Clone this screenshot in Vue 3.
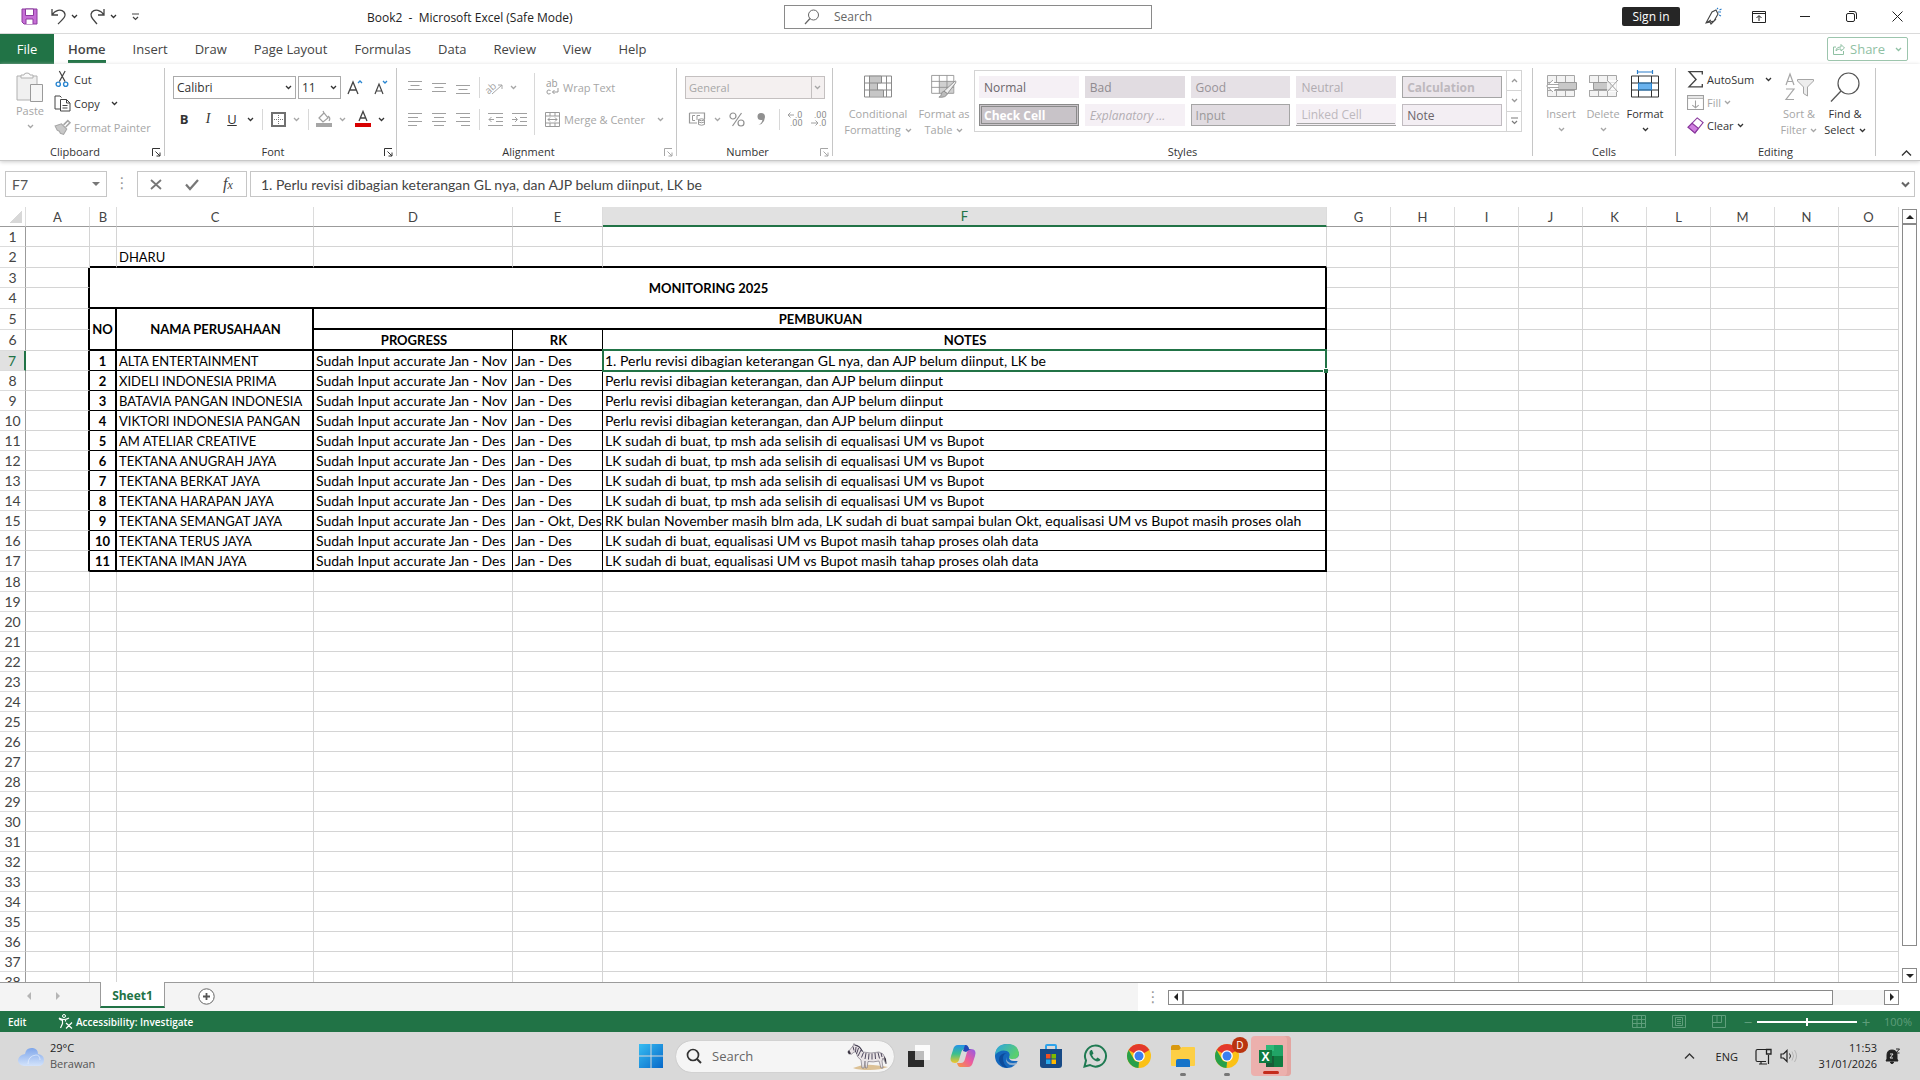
<script setup>
import { h, ref } from 'vue'

const icons = {
  save: [17, 17, `<path d="M1 1h15v15H3l-2-2z" fill="#c66fd6" stroke="#8b3a9e"/><path d="M4.500 1h8v6.500h-8z" fill="#fff" stroke="#8b3a9e"/><path d="M5 16v-5h7v5" fill="#fff" stroke="#8b3a9e"/>`],
  undo: [17, 17, `<path d="M2 1v6h6M2 7C5 2 11 .5 14 4c3 4-1 7-6 12" stroke="#444" stroke-width="1.300"/>`],
  redo: [17, 17, `<path d="M15 1v6H9M15 7C12 2 6 .5 3 4c-3 4 1 7 5 12" stroke="#444" stroke-width="1.300"/>`],
  caret: [7, 5, `<path d="M1 1l2.500 2.500L6 1" stroke="currentColor" stroke-width="1.300"/>`],
  more: [9, 8, `<path d="M1 1h7M2 4l2.500 2.500L7 4" stroke="#444" stroke-width="1.200"/>`],
  search: [16, 16, `<circle cx="9.500" cy="6" r="5" stroke="#666"/><path d="M6 9.500L1 15" stroke="#666" stroke-width="1.200"/>`],
  pen: [18, 17, `<path d="M2 15L8 4l4-2 2 4-4 7-8 2zM2 15l5-3M6 14l1 2 5-5" stroke="#444" stroke-width="1.100"/><path d="M13 1l1-1M14 4h3M15 7l2 1M15.500 2l2-1" stroke="#2a7dc9" stroke-width="1.100"/>`],
  ribbonopt: [14, 12, `<path d="M.5.500h13v11H.5zM.5 2.500h13M7 10V5M4.500 7L7 4.500 9.500 7" stroke="#222"/>`],
  min: [10, 2, `<path d="M0 .5h10" stroke="#222"/>`],
  restore: [11, 11, `<rect x=".5" y="2.500" width="8" height="8" rx="1.500" stroke="#222"/><path d="M3 .5h5q2.500 0 2.500 2.500v5" stroke="#222"/>`],
  close: [11, 11, `<path d="M.5.500l10 10M10.500.500l-10 10" stroke="#222"/>`],
  share: [12, 12, `<path d="M3 4H.5v7.500h10V8M3 8c0-3 2-4 5-4V1.500L11.500 5 8 8V6C6 6 4 6.500 3 8z" stroke="#8fc0a3"/>`],
  paste: [28, 31, `<path d="M1 4h20v24H1z" fill="#f0f0f0" stroke="#b0b0b0"/><path d="M5 6V3h3q0-2 3-2t3 2h3v3z" fill="#fafafa" stroke="#b0b0b0"/><path d="M14.500 12.500h12v17h-12z" fill="#f6f6f6" stroke="#9a9a9a"/>`],
  cut: [14, 16, `<path d="M4 0l5.500 10M9.500 0L4 10" stroke="#444" stroke-width="1.100"/><circle cx="3" cy="12.500" r="2" stroke="#2a86d1" stroke-width="1.300"/><circle cx="10" cy="12.500" r="2" stroke="#2a86d1" stroke-width="1.300"/>`],
  copy: [17, 17, `<path d="M6 14H1V1h5l1.500 1.500" stroke="#444"/><path d="M6.500 4.500h6l3.500 3.500v8H6.500z" fill="#fff" stroke="#444"/><path d="M12.500 4.500V8H16M8.500 10.500h5M8.500 13h5" stroke="#444"/>`],
  painter: [16, 15, `<path d="M1 6l6-2 5 5-3 5-3-1-1-2-2-1z" fill="#c8c8c8" stroke="#a6a6a6"/><path d="M9 5l4-4 2 2-4 4" stroke="#a6a6a6" stroke-width="1.500"/>`],
  launch: [9, 9, `<path d="M.5 8V.5H8M3.500 3.500L8 8M8 4.500V8H4.500" stroke="currentColor"/>`],
  grow: [16, 16, `<path d="M1 15L6 3l5 12M2.800 11h6.400" stroke="#444" stroke-width="1.300"/><path d="M11 4l2-2 2 2" stroke="#2a86d1" stroke-width="1.300"/>`],
  shrink: [16, 16, `<path d="M2 15L6 5l4 10M3.500 12h5" stroke="#444" stroke-width="1.200"/><path d="M10 2l2 2 2-2" stroke="#2a86d1" stroke-width="1.300"/>`],
  border: [15, 15, `<path d="M1 1h13v13H1z" stroke="#707070" stroke-width="2"/><path d="M7.500 3v9M3 7.500h9" stroke="#777" stroke-dasharray="1 1"/>`],
  fill: [16, 16, `<path d="M3 7l5-5 4 5-5 4zM8 2L7 0M12 5q3 2 1 5" stroke="#a0a0a0" stroke-width="1.200"/><path d="M0 12h16v4H0z" fill="#a6a6a6"/>`],
  fcolor: [16, 16, `<path d="M4 10L8 .5 12 10M5.300 7h5.400" stroke="#444" stroke-width="1.300"/><path d="M0 12h16v4H0z" fill="#d80000"/>`],
  atop: [14, 13, `<path d="M0 .5h14M2.500 4.500h9M0 8.500h14" stroke="#a0a0a0"/>`],
  amid: [14, 13, `<path d="M0 2.500h14M2.500 6.500h9M0 10.500h14" stroke="#a0a0a0"/>`],
  abot: [14, 13, `<path d="M0 4.500h14M2.500 8.500h9M0 12.500h14" stroke="#a0a0a0"/>`],
  aleft: [14, 13, `<path d="M0 .5h14M0 4.500h10M0 8.500h14M0 12.500h9" stroke="#a0a0a0"/>`],
  acenter: [14, 13, `<path d="M0 .5h14M2 4.500h10M0 8.500h14M2 12.500h10" stroke="#a0a0a0"/>`],
  aright: [14, 13, `<path d="M0 .5h14M4 4.500h10M0 8.500h14M5 12.500h9" stroke="#a0a0a0"/>`],
  orient: [16, 15, `<path d="M5 14L15 5M11 5h4v4" stroke="#a6a6a6"/><text x="-3" y="11" font-size="10" font-family="Open Sans" fill="#a0a0a0" transform="rotate(-42 4 7)">ab</text>`],
  outdent: [15, 13, `<path d="M0 .5h15M8 4.500h7M8 8.500h7M0 12.500h15M6 6.500H1M3.500 4L1 6.500 3.500 9" stroke="#a0a0a0"/>`],
  indent: [15, 13, `<path d="M0 .5h15M8 4.500h7M8 8.500h7M0 12.500h15M0 6.500h5M3 4l2.500 2.500L3 9" stroke="#a0a0a0"/>`],
  wrap: [14, 17, `<text x="1" y="8" font-size="10" font-family="Open Sans" fill="#999">ab</text><path d="M5.500 11.500q-3.500-1.500-3.500 1.500t3.500 1.500M13 9v4H7.500M9.500 11l-2 2 2 2" stroke="#999"/>`],
  merge: [15, 15, `<path d="M.5.500h14v14H.5zM.5 4h14M.5 11h14M5 .5V4M10 .5V4M5 11v3.500M10 11v3.500M3 7.500h9M5 5.500l-2 2 2 2M10 5.500l2 2-2 2" stroke="#999"/>`],
  currency: [17, 14, `<path d="M.5 1h15v6M8 11H.5V1" stroke="#999" stroke-width="1.200"/><path d="M6 3.500H3.500v5H6M8 8V3.500h3" stroke="#999"/><path d="M9.500 7.500q3-1.500 6 0v5q-3 1.500-6 0zM9.500 10q3 1.500 6 0M9.500 8q3 1.500 6 0" fill="#fff" stroke="#999"/>`],
  percent: [16, 15, `<circle cx="4" cy="4" r="3" stroke="#909090" stroke-width="1.200"/><circle cx="12" cy="11" r="3" stroke="#909090" stroke-width="1.200"/><path d="M12.500 1L3.500 14" stroke="#909090" stroke-width="1.200"/>`],
  comma: [9, 13, `<path d="M4 0a3.500 3.500 0 0 0 0 7q1.500 0 1.500-.5Q5 10 1.500 12q6-1.500 6.500-8Q8 0 4 0z" fill="#909090"/>`],
  incdec: [16, 16, `<path d="M7 4H1M3.500 1.500L1 4l2.500 2.500" stroke="#a0a0a0"/><text x="8" y="7" font-size="9" font-family="Roboto" fill="#8c8c8c">.0</text><text x="3" y="15" font-size="9" font-family="Roboto" fill="#8c8c8c">.00</text>`],
  decdec: [16, 16, `<path d="M0 12h7M4.500 9.500L7 12l-2.500 2.500" stroke="#a0a0a0"/><text x="3" y="7" font-size="9" font-family="Roboto" fill="#8c8c8c">.00</text><text x="8" y="15" font-size="9" font-family="Roboto" fill="#8c8c8c">.0</text>`],
  cond: [28, 22, `<path d="M5 0h12v8H5zM5 14h14v7H5zM5 8h8v6H5z" fill="#c6c6c6"/><path d="M.5.500h27v21H.5zM.5 7.500h27M.5 14.500h27M5.500.500v21M17.500.500v7M13.500 7.500v7M19.500 14.500v7M22.500.500v21" stroke="#8a8a8a"/>`],
  fmttable: [30, 27, `<path d="M9.500 7.500H26v14H9.500z" fill="#d0d0d0"/><path d="M.5.500h26v21H.5zM.5 7.500h26M.5 14.500h26M9.500.500v21M18.500.500v21" stroke="#8e8e8e"/><path d="M28 7q2 0 .5 2.500L19 22l-4-3z" fill="#eee" stroke="#888"/><path d="M15 19l4 3q-2 5-10 4 3-1 3-4 1-3 3-3z" fill="#bbb" stroke="#888"/>`],
  insert: [32, 23, `<path d="M2.500.500h27v21h-27zM2.500 7.500h27M2.500 15.500h27M11.500.500v21M20.500.500v21" fill="#f3f3f3" stroke="#a6a6a6"/><path d="M10 7.500h21.500v7H10z" fill="#c8c8c8" stroke="#999"/><path d="M9 4L2 11l7 7v-4h4V8H9z" fill="#fff" stroke="none"/><path d="M8 5l-6.500 6L8 17M2 9.500h12M2 12.500h12" stroke="#a6a6a6"/>`],
  delete: [32, 23, `<path d="M2.500.500h27v21h-27zM2.500 7.500h27M2.500 15.500h27M11.500.500v21M20.500.500v21" fill="#f3f3f3" stroke="#a6a6a6"/><path d="M0 8h6v7H0z" fill="#fff"/><path d="M6.500 7.500h17v7h-17z" fill="#c8c8c8" stroke="#999"/><path d="M20 5h12v12H20z" fill="#fff" fill-opacity=".7"/><path d="M20 5l11 12M31 5L20 17" stroke="#a0a0a0"/>`],
  format: [28, 28, `<path d="M6.500 0v4M21.500 0v4M6.500 2h15" stroke="#2a7dc9" stroke-width="1.200"/><path d="M7.500 13h13v7h-13z" fill="#69b2ee"/><path d="M.5 6h27v21H.5zM.5 13h27M.5 20h27M7.500 6v21M20.500 6v21" stroke="#333"/><path d="M7.500 13h13v7h-13z" stroke="#2a86d1"/>`],
  sum: [13, 15, `<path d="M12.500 3V.5H.8L7 7.500.800 14h11.700v-2.500" stroke="#444" stroke-width="1.200"/>`],
  fillcell: [16, 14, `<path d="M.5.500h15v13H.5zM.5 3h15M8 5v7M5 9.500L8 12l3-2.500" stroke="#a0a0a0"/>`],
  clear: [15, 15, `<path d="M9 .8L14.200 5 7 14 1 9z" fill="#fff" stroke="#8b3a9e"/><path d="M4.500 5.500L10 10l-3 4-6-5z" fill="#d07fe0" stroke="#8b3a9e"/>`],
  sort: [29, 28, `<path d="M1 12L5 1l4 11M2.500 8.500h5M1 16h8L1 26.500h8" stroke="#a6a6a6" stroke-width="1.200"/><path d="M12.500 6.500h16v1.500l-6 6v9l-4-2.500V14l-6-6z" fill="#ededed" stroke="#a6a6a6"/>`],
  find: [30, 30, `<circle cx="18.500" cy="11.500" r="10.500" fill="#fff" stroke="#555" stroke-width="1.200"/><path d="M11 19L1 29.500" stroke="#555" stroke-width="1.300"/>`],
  up: [11, 6, `<path d="M1 5.500L5.500 1 10 5.500" stroke="#333" stroke-width="1.300"/>`],
  chevdown: [9, 7, `<path d="M1 1.500L4.500 5 8 1.500" stroke="#666" stroke-width="2"/>`],
  x: [12, 11, `<path d="M1 1l10 9M11 1L1 10" stroke="#777" stroke-width="1.800"/>`],
  check: [14, 11, `<path d="M1 5.500L5 10 13 1" stroke="#777" stroke-width="2.200"/>`],
  plus: [17, 17, `<circle cx="8.500" cy="8.500" r="7.700" fill="#fff" stroke="#666"/><path d="M8.500 5v7M5 8.500h7" stroke="#555" stroke-width="1.800"/>`],
  access: [15, 15, `<circle cx="6" cy="2" r="1.500" stroke="#fff"/><path d="M1 4q5 3 10 0M4.500 5.500v4L2.500 14M7.500 5.500v2M1 4l1 1.500 2.500 1M8 9l6 5.500M14 8.500l-6 6" stroke="#fff" stroke-width="1.200"/>`],
  vnormal: [14, 13, `<path d="M.5.500h13v12H.5zM.5 4.500h13M.5 8.500h13M5 .5v12M9.500.500v12" stroke="#5f9e7b"/>`],
  vlayout: [14, 13, `<path d="M.5.500h13v12H.5zM3.500 2.500h7v8h-7zM5 4.500h4M5 6.500h4M5 8.500h4" stroke="#5f9e7b"/>`],
  vbreak: [14, 13, `<path d="M.5.500h13v12H.5zM5 .5v7H.5M9.500.500v7H5" stroke="#5f9e7b"/>`],
  cloud: [28, 21, `<defs><linearGradient id="cl" x1="0" y1="0" x2="0" y2="1"><stop offset="0" stop-color="#7fa6ea"/><stop offset="1" stop-color="#d3e3fb"/></linearGradient></defs><path d="M8 8q1-7 8-6 5 1 5 6 6 1 6 6 0 6-6 6H7q-6-1-6-6 1-5 7-6z" fill="url(#cl)"/><path d="M11 18q0-8 8-9 4 0 4 5" stroke="#eef5ff" opacity=".6"/>`],
  start: [24, 24, `<defs><linearGradient id="st" x1="0" y1="0" x2="1" y2="1"><stop offset="0" stop-color="#37bdf2"/><stop offset="1" stop-color="#0768c9"/></linearGradient></defs><path d="M0 0h11.500v11.500H0zM12.500 0H24v11.500H12.500zM0 12.500h11.500V24H0zM12.500 12.500H24V24H12.500z" fill="url(#st)"/>`],
  tsearch: [16, 16, `<circle cx="7" cy="7" r="5.500" stroke="#333" stroke-width="1.700"/><path d="M11 11l4 4" stroke="#333" stroke-width="1.900"/>`],
  zebra: [42, 27, `<path d="M7 25q10-4 20-3t15 2q-8 3-18 3-12 0-17-2z" fill="#dcc196"/><path d="M2 9l5-6 1-2.500 1.500 2Q14 3 17 9q8 2 16 0 5 1 6 6l1 6-3-6-1 3 1 7h-2l-2-7q-6 1.500-11 .5l-1 6.500h-1.500l-.5-7-1 7h-2l-1-8q-4-2-5-8l-2 0-3 2.500z" fill="#e9e4e6" stroke="#6a6472" stroke-width=".6"/><path d="M7 3.500l1 4M10 4l-.5 5M12.500 5l-2 6M15 7l-3 6M17.500 9.500l-2 5M20 10l-1 6M23 10.500l-.5 6M26 10.500v6M29 10l.5 6M32 9.500l1.500 6M35 10l1 4" stroke="#4c465c"/><path d="M8.500 2q5 0 8 6.500" stroke="#3f3a4e" stroke-width="1.200"/><path d="M1.500 9l1.500 2.500 2-1-2-3.500zM38 13l2 3 .5 5-2-4z" fill="#3b3542"/>`],
  taskview: [24, 24, `<path d="M8 1h15v15H8z" fill="#fbfbfb"/><path d="M1 7h14v9h2v7H1z" fill="#2b2b2b"/><path d="M8 7h9v9H8z" fill="#bdbdbd"/>`],
  copilot: [26, 24, `<defs><linearGradient id="cp1" x1="0" y1="0" x2="0" y2="1"><stop offset="0" stop-color="#2393e8"/><stop offset=".5" stop-color="#3cc08c"/><stop offset="1" stop-color="#f5c628"/></linearGradient><linearGradient id="cp2" x1="1" y1="0" x2="0" y2="1"><stop offset="0" stop-color="#8f5be8"/><stop offset=".5" stop-color="#ee5c9a"/><stop offset="1" stop-color="#f79a3d"/></linearGradient></defs><path d="M8 1h8q2 0 3 4h-4q-3 0-4 4l-2 7q-1 3-4 3-6 0-4-7l2-6q1-5 5-5z" fill="url(#cp1)"/><path d="M18 23h-8q-2 0-3-4h4q3 0 4-4l2-7q1-3 4-3 6 0 4 7l-2 6q-1 5-5 5z" fill="url(#cp2)"/><path d="M15 1q3 0 4 4h2l-2 1-3 2-3-1z" fill="#2547b8"/>`],
  edge: [24, 24, `<defs><linearGradient id="eg" x1="0" y1="0" x2="1" y2=".5"><stop offset="0" stop-color="#2aa3e6"/><stop offset="1" stop-color="#5cd06c"/></linearGradient></defs><circle cx="12" cy="12" r="12" fill="#1468bd"/><path d="M0 11Q1 0 12 0t12 9q0 6-7 6-3 0-3-2 2-4-2-6Q5 5 0 11z" fill="url(#eg)"/><path d="M8 14q0-4 4-5-8 0-8 7 1 7 9 8-5-4-5-10z" fill="#0c4c9c"/><path d="M14 13q0 4 5 4h4l1-1v-5q-1 4-6 4-4 0-4-2z" fill="#d9d9d9"/><path d="M11 13q0 6 7 6 3 0 4-1l-1 3q-11 2-10-8z" fill="#d9d9d9" opacity=".6"/>`],
  store: [24, 24, `<path d="M7 6V2q0-1 1-1h8q1 0 1 1v4" stroke="#2fa3ea" stroke-width="2"/><path d="M1 5h22v16q0 3-3 3H4q-3 0-3-3z" fill="#174a86"/><path d="M7 10h4.500v4.500H7z" fill="#f25022"/><path d="M12.500 10H17v4.500h-4.500z" fill="#7fba00"/><path d="M7 15.500h4.500V20H7z" fill="#28a8ea"/><path d="M12.500 15.500H17V20h-4.500z" fill="#ffb900"/>`],
  whatsapp: [24, 24, `<path d="M1.500 22.500l1.500-6a10.500 10.500 0 1 1 4 4.500z" stroke="#1f7a52" stroke-width="2"/><path d="M8 6q-2 1-1.500 4Q9 16 14 17.500q3 0 3.500-2l-3-2-1.500 1.500q-3-1-4-4L10.500 9.500 9 6z" fill="#1f7a52"/>`],
  chrome: [24, 24, `<circle cx="12" cy="12" r="12" fill="#fbc116"/><path d="M12 12L1.600 6A12 12 0 0 1 22.400 6z" fill="#e3392c"/><path d="M1.600 6L8 17l4 1-.500 6A12 12 0 0 1 1.600 6z" fill="#27a04a"/><circle cx="12" cy="12" r="5.800" fill="#fff"/><circle cx="12" cy="12" r="4.500" fill="#3a7ff0"/>`],
  folder: [26, 24, `<path d="M1 3q0-2 2-2h6l2 3-1 3H1z" fill="#d9990f"/><path d="M1 6h8l3-3h12q1 0 1 1v17q0 1-1 1H2q-1 0-1-1z" fill="#fdcf45"/><path d="M6 23v-6q0-2 2-2h10q2 0 2 2v6z" fill="#1673c9"/>`],
  excel: [26, 24, `<path d="M8 1h16q1 0 1 1v20q0 1-1 1H8z" fill="#21a366"/><path d="M8 1h8v6H8z" fill="#2fb878"/><path d="M16 12h9v10q0 1-1 1h-8z" fill="#107c41"/><path d="M8 12h8v11H8z" fill="#185c37"/><path d="M1 6h13v13H1z" fill="#107c41"/><text x="3.500" y="16.500" font-size="12" font-weight="bold" font-family="Open Sans" fill="#fff">X</text>`],
  net: [18, 17, `<path d="M11 13.500H2.500Q1 13.500 1 12V3q0-1.500 1.500-1.500H11M4 16h8M6 13.500V16M13.500 7v9" stroke="#222" stroke-width="1.200"/><path d="M11.500 1.500h4.500v4.500h-4.500z" stroke="#222" stroke-width="1.300"/>`],
  speaker: [17, 14, `<path d="M1 5v4h2.500L7 12.500v-11L3.500 5z" stroke="#222" stroke-width="1.200"/><path d="M9.500 4.500q2 2.500 0 5" stroke="#222"/><path d="M12 2.500q3 4.500 0 9M14.500 1q4 6 0 12" stroke="#b5b5b5"/>`],
  bell: [16, 16, `<path d="M2 11V7q0-5 5-5t5 5v4l1 2H1zM5.500 14h3q0 1.500-1.500 1.500T5.500 14z" fill="#222" stroke="#222"/><path d="M5 6h3l-3 4h3" stroke="#ddd"/><path d="M11 1h3.500L11 5h3.500" stroke="#222"/>`],
  tri_l: [6, 8, `<path d="M5 0v8L1 4z" fill="currentColor"/>`],
  tri_r: [6, 8, `<path d="M1 0v8l4-4z" fill="currentColor"/>`],
  tri_u: [8, 6, `<path d="M0 5h8L4 1z" fill="currentColor"/>`],
  tri_d: [8, 6, `<path d="M0 1h8L4 5z" fill="currentColor"/>`],
}

const Ico = ({ n }) => {
  const [w, hh, body] = icons[n]
  return h('svg', { width: w, height: hh, viewBox: `0 0 ${w} ${hh}`, fill: 'none', innerHTML: body, 'aria-hidden': 'true' })
}
Ico.props = ['n']

const tabs = ['Home', 'Insert', 'Draw', 'Page Layout', 'Formulas', 'Data', 'Review', 'View', 'Help']
const styles = [
  ['Normal', 'normal'], ['Bad', 'bad'], ['Good', 'good'], ['Neutral', 'neutral'], ['Calculation', 'calc'],
  ['Check Cell', 'check'], ['Explanatory ...', 'expl'], ['Input', 'input'], ['Linked Cell', 'linked'], ['Note', 'note'],
]
const cols = 'ABCDEFGHIJKLMNO'.split('')
const formula = ref('1. Perlu revisi dibagian keterangan GL nya, dan AJP belum diinput, LK be')
const zoom = ref(50)

const nov = 'Sudah Input accurate Jan - Nov'
const des = 'Sudah Input accurate Jan - Des'
const rev = 'Perlu revisi dibagian keterangan, dan AJP belum diinput'
const lk = 'LK sudah di buat, tp msh ada selisih di equalisasi UM vs Bupot'
const olah = 'LK sudah di buat, equalisasi UM vs Bupot masih tahap proses olah data'
const records = [
  ['ALTA ENTERTAINMENT', nov, 'Jan - Des', formula.value],
  ['XIDELI INDONESIA PRIMA', nov, 'Jan - Des', rev],
  ['BATAVIA PANGAN INDONESIA', nov, 'Jan - Des', rev],
  ['VIKTORI INDONESIA PANGAN', nov, 'Jan - Des', rev],
  ['AM ATELIAR CREATIVE', des, 'Jan - Des', lk],
  ['TEKTANA ANUGRAH JAYA', des, 'Jan - Des', lk],
  ['TEKTANA BERKAT JAYA', des, 'Jan - Des', lk],
  ['TEKTANA HARAPAN JAYA', des, 'Jan - Des', lk],
  ['TEKTANA SEMANGAT JAYA', des, 'Jan - Okt, Des', 'RK bulan November masih blm ada, LK sudah di buat sampai bulan Okt, equalisasi UM vs Bupot masih proses olah'],
  ['TEKTANA TERUS JAYA', des, 'Jan - Des', olah],
  ['TEKTANA IMAN JAYA', des, 'Jan - Des', olah],
]

const cell = (t = '', cls = '', cs = 1, rs = 1) => ({ t, cls, cs, rs })
const blanks = (n) => Array.from({ length: n }, () => cell())
const tallRows = [2, 4, 5, 6, 17]

function rowCells(r) {
  if (r === 1 || r > 17) return blanks(15)
  if (r === 2) return [cell(), cell('', 'b2'), cell('DHARU', 'caps b2'), cell('', 'b2'), cell('', 'b2'), cell('', 'b2'), ...blanks(9)]
  const a = cell('', 'r2')
  if (r === 3) return [a, cell('MONITORING 2025', 'hd caps r2 b2', 5, 2), ...blanks(9)]
  if (r === 4) return [a, ...blanks(9)]
  if (r === 5) return [a, cell('NO', 'hd r2 b2 tight', 1, 2), cell('NAMA PERUSAHAAN', 'hd caps r2 b2', 1, 2), cell('PEMBUKUAN', 'hd caps r2 b2', 3), ...blanks(9)]
  if (r === 6) return [a, cell('PROGRESS', 'hd caps r1 b2'), cell('RK', 'hd caps r1 b2'), cell('NOTES', 'hd caps r2 b2'), ...blanks(9)]
  const [name, prog, rk, note] = records[r - 7]
  const b = r === 17 ? ' b2' : ' b1'
  return [a, cell(String(r - 6), 'hd tight r2' + b), cell(name, 'caps r2' + b), cell(prog, 'r1' + b), cell(rk, 'r1' + b),
    cell(note, 'r2' + b + (r === 7 ? ' active' : '')), ...blanks(9)]
}
const rows = Array.from({ length: 38 }, (_, i) => ({ n: i + 1, tall: tallRows.includes(i + 1), cells: rowCells(i + 1) }))
</script>

<template>
  <div class="app">
    <header class="title">
      <div class="qat">
        <button class="q-save" aria-label="Save"><Ico n="save" /></button>
        <button class="q-btn" aria-label="Undo"><Ico n="undo" /></button>
        <button class="q-car" aria-label="Undo list"><Ico n="caret" /></button>
        <button class="q-btn" aria-label="Redo"><Ico n="redo" /></button>
        <button class="q-car" aria-label="Redo list"><Ico n="caret" /></button>
        <button class="q-more" aria-label="Customize toolbar"><Ico n="more" /></button>
      </div>
      <div class="doc">Book2&nbsp; -&nbsp; Microsoft Excel (Safe Mode)</div>
      <label class="tsearch"><Ico n="search" /><input type="text" placeholder="Search" aria-label="Search" /></label>
      <div class="win">
        <button class="signin">Sign in</button>
        <button v-for="b in ['pen', 'ribbonopt', 'min', 'restore', 'close']" :key="b" class="wbtn" :aria-label="b"><Ico :n="b" /></button>
      </div>
    </header>

    <nav class="tabs">
      <button class="file">File</button>
      <button v-for="t in tabs" :key="t" class="tab" :class="{ on: t === 'Home' }"><span>{{ t }}</span></button>
      <button class="share"><Ico n="share" /><span>Share</span><Ico n="caret" /></button>
    </nav>

    <section class="ribbon">
      <div class="group g-clip">
        <div class="body">
          <button class="big dim paste"><Ico n="paste" /><span>Paste</span><Ico n="caret" /></button>
          <div class="stack s24">
            <button class="lb cutb"><Ico n="cut" /><span>Cut</span></button>
            <button class="lb"><Ico n="copy" /><span>Copy</span><Ico n="caret" class="far" /></button>
            <button class="lb dim"><Ico n="painter" /><span>Format Painter</span></button>
          </div>
        </div>
        <div class="gl">Clipboard<Ico n="launch" /></div>
      </div>

      <div class="group g-font">
        <div class="body col">
          <div class="row">
            <div class="sel fam"><select aria-label="Font"><option>Calibri</option></select><Ico n="caret" /></div>
            <div class="sel size"><select aria-label="Font size"><option>11</option></select><Ico n="caret" /></div>
            <button class="ib wide" aria-label="Grow font"><Ico n="grow" /></button>
            <button class="ib" aria-label="Shrink font"><Ico n="shrink" /></button>
          </div>
          <div class="row">
            <button class="ib bold">B</button><button class="ib ital">I</button><button class="ib und">U</button>
            <button class="cb" aria-label="Underline styles"><Ico n="caret" /></button><i class="vs"></i>
            <button class="ib" aria-label="Borders"><Ico n="border" /></button><button class="cb dim" aria-label="Border list"><Ico n="caret" /></button><i class="vs"></i>
            <button class="ib" aria-label="Fill color"><Ico n="fill" /></button><button class="cb dim" aria-label="Fill list"><Ico n="caret" /></button>
            <button class="ib gap3" aria-label="Font color"><Ico n="fcolor" /></button><button class="cb" aria-label="Color list"><Ico n="caret" /></button>
          </div>
        </div>
        <div class="gl">Font<Ico n="launch" /></div>
      </div>

      <div class="group g-align">
        <div class="body">
          <div class="stack s32 al">
            <div class="row">
              <button v-for="n in ['atop', 'amid', 'abot']" :key="n" class="ib" :aria-label="n"><Ico :n="n" /></button><i class="vs"></i>
              <button class="ib" aria-label="Orientation"><Ico n="orient" /></button><button class="cb dim" aria-label="Orientation list"><Ico n="caret" /></button>
            </div>
            <div class="row">
              <button v-for="n in ['aleft', 'acenter', 'aright']" :key="n" class="ib" :aria-label="n"><Ico :n="n" /></button><i class="vs"></i>
              <button v-for="n in ['outdent', 'indent']" :key="n" class="ib" :aria-label="n"><Ico :n="n" /></button>
            </div>
          </div>
          <i class="vs tall"></i>
          <div class="stack s32">
            <button class="lb dim"><Ico n="wrap" /><span>Wrap Text</span></button>
            <button class="lb dim"><Ico n="merge" /><span>Merge &amp; Center</span><Ico n="caret" class="far" /></button>
          </div>
        </div>
        <div class="gl">Alignment<Ico n="launch" class="dim" /></div>
      </div>

      <div class="group g-num">
        <div class="body col">
          <div class="row">
            <div class="sel num dim"><select aria-label="Number format" disabled><option>General</option></select><Ico n="caret" /></div>
          </div>
          <div class="row">
            <button class="ib" aria-label="Accounting"><Ico n="currency" /></button><button class="cb wide dim" aria-label="Accounting list"><Ico n="caret" /></button>
            <button class="ib" aria-label="Percent"><Ico n="percent" /></button><button class="ib" aria-label="Comma"><Ico n="comma" /></button><i class="vs"></i>
            <button class="ib" aria-label="Increase decimal"><Ico n="incdec" /></button><button class="ib" aria-label="Decrease decimal"><Ico n="decdec" /></button>
          </div>
        </div>
        <div class="gl">Number<Ico n="launch" class="dim" /></div>
      </div>

      <div class="group g-styles">
        <div class="body">
          <button class="big dim two cf"><Ico n="cond" /><span>Conditional</span><span>Formatting <Ico n="caret" /></span></button>
          <button class="big dim two ft"><Ico n="fmttable" /><span>Format as</span><span>Table <Ico n="caret" /></span></button>
          <div class="gallery">
            <div class="swatches">
              <button v-for="[t, c] in styles" :key="t" :class="'sw ' + c">{{ t }}</button>
            </div>
            <div class="gscroll">
              <button aria-label="Row up"><Ico n="caret" class="flip" /></button>
              <button aria-label="Row down"><Ico n="caret" /></button>
              <button aria-label="More styles"><Ico n="more" /></button>
            </div>
          </div>
        </div>
        <div class="gl">Styles</div>
      </div>

      <div class="group g-cells">
        <div class="body">
          <button class="big dim"><Ico n="insert" /><span>Insert</span><Ico n="caret" /></button>
          <button class="big dim"><Ico n="delete" /><span>Delete</span><Ico n="caret" /></button>
          <button class="big fmt"><Ico n="format" /><span>Format</span><Ico n="caret" /></button>
        </div>
        <div class="gl">Cells</div>
      </div>

      <div class="group g-edit">
        <div class="body">
          <div class="stack s23">
            <button class="lb"><Ico n="sum" /><span>AutoSum</span><Ico n="caret" class="far" /></button>
            <button class="lb dim"><Ico n="fillcell" /><span>Fill</span><Ico n="caret" /></button>
            <button class="lb"><Ico n="clear" /><span>Clear</span><Ico n="caret" /></button>
          </div>
          <button class="big dim two"><Ico n="sort" /><span>Sort &amp;</span><span>Filter <Ico n="caret" /></span></button>
          <button class="big two"><Ico n="find" /><span>Find &amp;</span><span>Select <Ico n="caret" /></span></button>
        </div>
        <div class="gl">Editing</div>
      </div>
      <button class="collapse" aria-label="Collapse ribbon"><Ico n="up" /></button>
    </section>

    <section class="fbar">
      <div class="name"><input value="F7" aria-label="Name box" /><Ico n="tri_d" /></div>
      <span class="dots">⋮</span>
      <div class="fbtns">
        <button aria-label="Cancel"><Ico n="x" /></button>
        <button aria-label="Enter"><Ico n="check" /></button>
        <button class="fx" aria-label="Insert function"><i>f<small>x</small></i></button>
      </div>
      <div class="formula"><input v-model="formula" aria-label="Formula" /><button aria-label="Expand"><Ico n="chevdown" /></button></div>
    </section>

    <main class="sheet">
      <div class="grid">
        <table>
          <colgroup>
            <col class="wh" /><col class="w64" /><col class="wb" /><col class="wc" /><col class="wd" /><col class="we" /><col class="wf" />
            <col v-for="i in 8" :key="i" class="w64" /><col />
          </colgroup>
          <thead>
            <tr>
              <th class="corner"></th>
              <th v-for="c in cols" :key="c" scope="col" :class="{ cur: c === 'F' }">{{ c }}</th>
            </tr>
          </thead>
          <tbody>
            <tr v-for="r in rows" :key="r.n" :class="{ tall: r.tall }">
              <th scope="row" :class="{ cur: r.n === 7 }">{{ r.n }}</th>
              <td v-for="(c, i) in r.cells" :key="i" :class="c.cls" :colspan="c.cs" :rowspan="c.rs">{{ c.t }}</td>
            </tr>
          </tbody>
        </table>
      </div>
      <div class="vbar">
        <button class="sb" aria-label="Scroll up"><Ico n="tri_u" /></button>
        <div class="vthumb"></div>
        <div class="vtrack"></div>
        <button class="sb" aria-label="Scroll down"><Ico n="tri_d" /></button>
      </div>
    </main>

    <section class="sheets">
      <button class="nav" aria-label="Previous sheet"><Ico n="tri_l" /></button>
      <button class="nav" aria-label="Next sheet"><Ico n="tri_r" /></button>
      <button class="stab">Sheet1</button>
      <button class="add" aria-label="New sheet"><Ico n="plus" /></button>
      <div class="hwrap">
        <span class="dots">⋮</span>
        <button class="sb" aria-label="Scroll left"><Ico n="tri_l" /></button>
        <div class="hthumb"></div>
        <div class="htrack"></div>
        <button class="sb" aria-label="Scroll right"><Ico n="tri_r" /></button>
      </div>
    </section>

    <footer class="status">
      <span class="mode">Edit</span>
      <span class="acc"><Ico n="access" />Accessibility: Investigate</span>
      <div class="views">
        <button v-for="v in ['vnormal', 'vlayout', 'vbreak']" :key="v" :aria-label="v"><Ico :n="v" /></button>
        <span class="pm">−</span>
        <input v-model="zoom" type="range" min="0" max="100" aria-label="Zoom" />
        <span class="pm">+</span>
        <span class="pct">100%</span>
      </div>
    </footer>

    <footer class="taskbar">
      <div class="weather"><Ico n="cloud" /><div><b>29°C</b><span>Berawan</span></div></div>
      <div class="apps">
        <button class="app-b" aria-label="Start"><Ico n="start" /></button>
        <label class="pill"><Ico n="tsearch" /><input type="text" placeholder="Search" aria-label="Search the PC" /><Ico n="zebra" /></label>
        <button v-for="a in ['taskview', 'copilot', 'edge', 'store', 'whatsapp', 'chrome']" :key="a" class="app-b" :aria-label="a"><Ico :n="a" /></button>
        <button class="app-b run" aria-label="Files"><Ico n="folder" /></button>
        <button class="app-b run" aria-label="Chrome profile"><Ico n="chrome" /><em>D</em></button>
        <button class="app-b live" aria-label="Excel"><Ico n="excel" /></button>
      </div>
      <div class="tray">
        <Ico n="up" />
        <span class="lang">ENG</span>
        <Ico n="net" /><Ico n="speaker" />
        <div class="clock"><span>11:53</span><span>31/01/2026</span></div>
        <Ico n="bell" />
      </div>
    </footer>
  </div>
</template>

<style>
body { margin: 0; background: #fff; }
</style>

<style scoped>
.app { display: flex; flex-direction: column; height: 100vh; overflow: hidden; background: #fff; font-family: "Open Sans", "Noto Sans", sans-serif; font-size: 11px; color: #333; }
.app * { box-sizing: border-box; }
button, input, select { font: inherit; color: inherit; background: none; border: 0; padding: 0; margin: 0; outline: 0; border-radius: 0; }
button { display: flex; align-items: center; justify-content: center; white-space: nowrap; }
svg { flex: none; display: block; overflow: visible; }
.dim { color: #a6a6a6; }

.title { display: flex; align-items: center; height: 34px; flex: none; border-bottom: 1px solid #dadada; }
.qat { display: flex; align-items: center; flex: 0 0 367px; padding-left: 20px; height: 100%; }
.q-save { width: 18px; margin-right: 10px; }
.q-btn { width: 20px; }
.q-car { width: 13px; margin-right: 6px; }
.q-more { width: 12px; margin-left: 3px; }
.doc { flex: 0 0 417px; font-size: 12px; color: #222; padding-top: 1px; }
.tsearch { display: flex; align-items: center; flex: 0 1 368px; height: 24px; border: 1px solid #8a8a8a; padding-left: 19px; gap: 14px; font-size: 12px; }
.tsearch input { flex: 1; min-width: 0; }
input::placeholder { color: #666; opacity: 1; }
.win { display: flex; align-items: center; margin-left: auto; height: 32px; }
.signin { width: 58px; height: 19px; background: #262626; color: #fff; border-radius: 2px; font-size: 12px; margin-right: 10px; }
.wbtn { width: 46px; height: 32px; }

.tabs { display: flex; height: 30px; flex: none; font-size: 13px; color: #444; }
.file { width: 54px; background: #217346; color: #fff; }
.tab { padding: 0 13px 0 14px; }
.tab span { display: flex; align-items: center; height: 28px; border-bottom: 3px solid transparent; border-top: 3px solid transparent; }
.tab.on { font-weight: 600; }
.tab.on span { border-bottom-color: #217346; }
.share { margin: 3px 12px 3px auto; width: 81px; border: 1px solid #9cc5ad; border-radius: 2px; color: #8fc0a3; gap: 5px; }
.share span { margin-right: 5px; }

.ribbon { display: flex; height: 97px; flex: none; padding: 4px 44px 0 0; border-bottom: 1px solid #c8c8c8; box-shadow: 0 1px 4px #ccc; position: relative; }
.group { display: flex; flex-direction: column; height: 88px; border-right: 1px solid #c6c6c6; }
.body { display: flex; flex: none; height: 75px; }
.body.col { flex-direction: column; padding-top: 3px; }
.gl { position: relative; text-align: center; line-height: 17px; padding-right: 14px; color: #333; }
.gl svg { position: absolute; right: 3px; top: 5px; }
.stack { display: flex; flex-direction: column; align-items: flex-start; }
.s24 .lb { height: 24px; }
.s23 { padding-left: 11px; width: 100px; }
.s23 .lb { height: 23px; }
.s32 { padding-top: 3px; }
.s32 .lb { height: 32px; gap: 4px; }
.row { display: flex; align-items: center; height: 32px; }
.lb { gap: 5px; }
.s24 .lb > svg:first-child, .s23 .lb > svg:first-child { width: 17px; height: 17px; }
.s24 .lb { gap: 3px; }
.s23 .lb { gap: 3px; }
.far { margin-left: 8px; }
.ib { width: 24px; height: 22px; }
.cb { width: 12px; height: 22px; }
.vs { width: 1px; height: 21px; background: #d8d8d8; margin: 0 3px 0 6px; }
.vs.tall { height: 62px; margin: 5px 10px 0 3px; }
.al .vs { margin: 0 3px 0 4px; }
.gap3 { margin-left: 3px; }
.bold { font-weight: 700; font-size: 13px; }
.ital { font-style: italic; font-family: "Liberation Serif", serif; font-size: 14px; }
.und { text-decoration: underline; font-size: 13px; }
.big { flex-direction: column; justify-content: flex-start; width: 42px; height: 75px; padding-top: 7px; line-height: 16px; }
.big > svg:first-child { margin-bottom: 8px; height: 23px; }
.big span { display: flex; align-items: center; gap: 4px; }
.big > span + svg { margin-top: 5px; }

.g-clip { width: 165px; }
.paste { width: 54px; padding-left: 6px; }
.paste > svg:first-child { height: 31px; margin-bottom: 0; margin-top: -3px; }
.g-clip .body { margin-top: -1px; height: 76px; }
.paste { padding-top: 8px; }
.g-font { width: 232px; padding-left: 7px; }
.g-font .gl, .g-align .gl, .g-num .gl { padding-right: 22px; }
.sel { position: relative; height: 23px; border: 1px solid #ababab; display: flex; align-items: center; }
.sel select { appearance: none; width: 100%; height: 100%; padding-left: 3px; font-size: 12px; opacity: 1; }
.sel svg { position: absolute; right: 3px; pointer-events: none; }
.fam { width: 123px; margin: 0 2px 0 1px; }
.size { width: 43px; }
.wide.ib { width: 28px; }
.g-align { width: 280px; padding-left: 6px; }
.g-num { width: 156px; padding-left: 8px; }
.num { width: 140px; background: #f4f0f0; border-color: #c4c0c0; }
.num select { color: #a6a6a6; margin-right: 12px; border-right: 1px solid #c4c0c0; }
.g-num .cb.wide { width: 16px; }
.g-num .sel select { font-size: 11px; }
.g-styles { flex: 1; min-width: 0; }
.g-styles .body { padding-right: 10px; }
.cf { width: 88px; padding-left: 2px; }
.ft { width: 46px; }
.gallery { flex: 1; display: flex; min-width: 0; height: 62px; border: 1px solid #d4d4d4; margin: 2px 0 0 7px; }
.swatches { flex: 1; min-width: 0; display: grid; grid-template-columns: repeat(5, minmax(0, 1fr)); grid-template-rows: 22px 22px; gap: 6px; padding: 5px 4px; }
.sw { justify-content: flex-start; padding-left: 4px; font-size: 12px; overflow: hidden; border: 1px solid transparent; color: #777; }
.normal { background: #f5f0f5; color: #6a656a; }
.bad { background: #e1dce1; color: #8f8a8f; }
.good { background: #e6e1e6; color: #989398; }
.neutral { background: #ebe6eb; color: #b0abb0; }
.calc { background: #ebe6eb; color: #bdb8bd; border-color: #a5a5a5; font-weight: 700; }
.check { background: #c8c3c8; color: #fff; border: 3px double #8a8a8a; font-weight: 700; padding-left: 2px; }
.expl { background: #f5f0f5; color: #b3aeb3; font-style: italic; }
.input { background: #e1dce1; color: #999; border-color: #a5a5a5; }
.linked { background: #f5f0f5; color: #bdb8bd; border-bottom: 3px double #a5a5a5; }
.note { background: #f3eef3; color: #6a656a; border-color: #c0bbc0; }
.gscroll { width: 15px; border-left: 1px solid #d4d4d4; display: flex; flex-direction: column; }
.gscroll button { flex: 1; border-bottom: 1px solid #d4d4d4; color: #999; }
.gscroll button:last-child { border-bottom: 0; opacity: .7; }
.flip { transform: rotate(180deg); }
.g-styles .gl { padding-right: 0; }
.g-cells { width: 143px; }
.g-cells .body { padding-left: 7px; }
.fmt { padding-top: 2px; }
.fmt > svg:first-child { height: 28px; }
.g-cells .gl, .g-edit .gl { padding-right: 0; }
.g-edit { width: 200px; }
.g-edit .big { width: 46px; }
.g-edit .big > svg:first-child { height: 30px; margin: -3px 0 4px; }
.collapse { position: absolute; right: 8px; bottom: 4px; }

.fbar { display: flex; height: 46px; flex: none; padding: 10px 5px 0; font-size: 14px; font-family: Lato, sans-serif; color: #444; }
.name, .fbtns, .formula { display: flex; align-items: center; height: 26px; border: 1px solid #c6c6c6; background: #fff; }
.name { width: 102px; padding: 0 6px; }
.name input { flex: 1; min-width: 0; color: #555; }
.name svg { color: #777; }
.dots { width: 30px; text-align: center; color: #999; font-size: 15px; line-height: 24px; font-family: "DejaVu Sans", sans-serif; }
.fbtns { width: 110px; margin-right: 3px; }
.fbtns button { flex: 1; }
.fx { font-family: "Liberation Serif", serif; font-size: 16px; }
.fx small { font-size: 12px; }
.formula { flex: 1; padding: 0 4px 0 10px; }
.formula input { flex: 1; color: #444; }

.sheet { display: flex; flex: 1; min-height: 0; }
.grid { flex: 1; min-width: 0; overflow: hidden; border-bottom: 1px solid #9b9b9b; }
table { width: 100%; table-layout: fixed; border-collapse: separate; border-spacing: 0; font-family: Lato, sans-serif; font-size: 14px; color: #000; }
.wh { width: 26px; } .w64 { width: 64px; } .wb { width: 27px; } .wc { width: 197px; } .wd { width: 199px; } .we { width: 90px; } .wf { width: 724px; }
tr { height: 20px; }
tr.tall { height: 21px; }
td, th { padding: 0; line-height: 18px; white-space: nowrap; overflow: hidden; border-right: 1px solid #d4d4d4; border-bottom: 1px solid #d4d4d4; }
td { padding-left: 2px; text-align: left; vertical-align: bottom; }
th { font-weight: 400; color: #444; text-align: center; border-color: #dcdcdc; }
thead th { border-bottom-color: #9b9b9b; font-size: 13px; }
tbody th { border-right-color: #9b9b9b; }
thead th.cur { background: #e1e1e1; color: #217346; border-bottom: 2px solid #217346; }
tbody th.cur { background: #e1e1e1; color: #217346; border-right: 2px solid #217346; }
.corner { background: linear-gradient(135deg, transparent 50%, #d8d8d8 50%) 10px 4px / 12px 12px no-repeat; }
.hd { font-weight: 700; text-align: center; vertical-align: middle; }
.caps { font-size: 13px; }
.tight { padding-left: 0; font-size: 13px; }
.r1 { border-right: 1px solid #000; }
.r2 { border-right: 2px solid #000; }
.b1 { border-bottom: 1px solid #000; }
.b2 { border-bottom: 2px solid #000; }
.active { position: relative; overflow: visible; }
.active::before { content: ""; position: absolute; inset: -2px -2px -2px -1px; border: 2px solid #217346; }
.active::after { content: ""; position: absolute; right: -3px; bottom: -3px; width: 4px; height: 4px; background: #217346; border: solid #fff; border-width: 1px 0 0 1px; box-sizing: content-box; }

.vbar { width: 21px; display: flex; flex-direction: column; padding: 2px 3px 0; }
.sb { width: 15px; height: 15px; border: 1px solid #8a8a8a; background: #fff; flex: none; color: #222; }
.vthumb { flex: 722 1 0; border: 1px solid #8a8a8a; background: #fff; }
.vtrack { flex: 22 1 0; }

.sheets { display: flex; align-items: flex-start; height: 28px; flex: none; background: #f4f4f4; }
.nav { width: 29px; height: 26px; color: #b5b5b5; }
.nav:first-child { margin-left: 14px; }
.stab { width: 65px; height: 26px; margin: -1px 0 0 28px; padding-top: 2px; background: #fff; border: solid #9b9b9b; border-width: 0 1px; border-bottom: 2px solid #217346; color: #217346; font-weight: 700; font-size: 12px; position: relative; }
.add { height: 27px; margin-left: 33px; }
.hwrap { display: flex; align-items: center; margin-left: auto; height: 28px; flex: 0 1 782px; padding-right: 21px; background: #fff; }
.hthumb { flex: 650 1 0; height: 15px; border: 1px solid #8a8a8a; background: #fff; }
.htrack { flex: 51 1 0; height: 15px; background: #f3f3f3; }

.status { display: flex; align-items: center; height: 21px; flex: none; background: #217346; color: #fff; font-size: 10px; padding: 0 8px; font-weight: 600; }
.mode { width: 50px; }
.acc { display: flex; align-items: center; gap: 3px; }
.views { margin-left: auto; display: flex; align-items: center; color: #5f9e7b; font-weight: 400; }
.views button { width: 40px; }
.pm { width: 18px; text-align: center; font-size: 15px; line-height: 20px; font-weight: 400; }
.views input { appearance: none; width: 100px; height: 8px; background: linear-gradient(#fff, #fff) center / 100% 2px no-repeat; }
.views input::-webkit-slider-thumb { appearance: none; width: 2px; height: 8px; background: #fff; }
.pct { width: 37px; text-align: right; font-size: 11px; }

.taskbar { display: flex; align-items: center; justify-content: space-between; height: 48px; flex: none; background: #d9d9d9; position: relative; color: #222; }
.weather { display: flex; align-items: center; gap: 5px; padding-left: 17px; width: 617px; line-height: 16px; }
.weather b, .weather span { display: block; font-weight: 400; color: #222; }
.weather span { color: #555; }
.apps { display: flex; align-items: center; flex: 1; padding-left: 12px; }
.app-b { width: 44px; height: 40px; position: relative; }
.pill { display: flex; align-items: center; width: 218px; height: 31px; border-radius: 16px; background: #f5f5f5; box-shadow: 0 0 1px #999; padding: 0 6px 0 10px; margin: 0 3px; gap: 10px; font-size: 13px; }
.pill input { flex: 1; min-width: 0; }
.run::after, .live::after { content: ""; position: absolute; bottom: 0; width: 6px; height: 3px; border-radius: 2px; background: #777; }
.live::after { width: 16px; background: #c42b1c; bottom: 2px; }
.live { background: #ecb0ad; border-radius: 4px; width: 40px; margin-left: 2px; box-shadow: inset -4px 0 0 #e3a5a1; }
.app-b em { position: absolute; top: 1px; right: 1px; width: 16px; height: 16px; border-radius: 8px; background: #b9340f; color: #fff; font-style: normal; font-size: 10px; line-height: 16px; }
.tray { display: flex; align-items: center; padding-right: 19px; }
.lang { margin: 0 17px 0 21px; }
.tray svg + svg { margin-left: 7px; }
.clock { width: 80px; text-align: right; line-height: 16px; margin-right: 8px; }
.clock span { display: block; }
</style>
